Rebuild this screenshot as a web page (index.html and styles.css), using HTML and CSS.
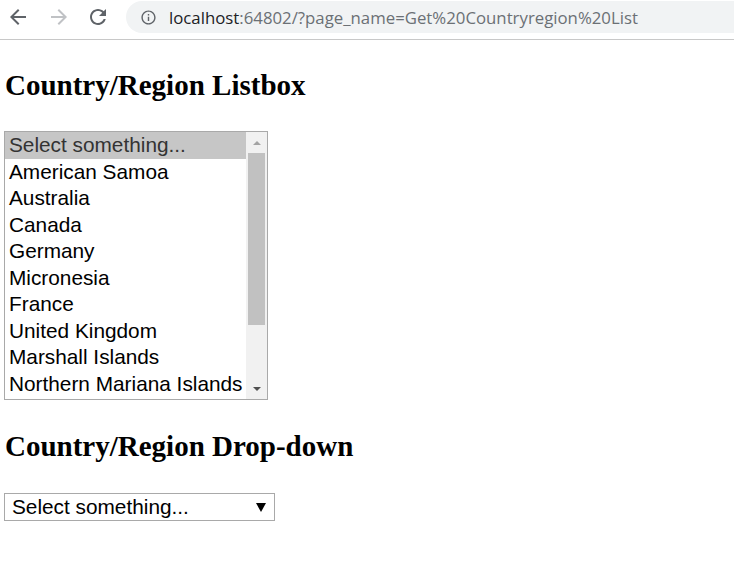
FILE: index.html
```html
<!DOCTYPE html>
<html lang="en">
<head>
<meta charset="utf-8">
<title>Get Countryregion List</title>
<link rel="stylesheet" href="styles.css">
</head>
<body>
<header class="chrome">
  <div class="nav">
    <svg class="nav-icon back" viewBox="0 0 24 24" width="24" height="24"><path d="M20 11H7.83l5.59-5.59L12 4l-8 8 8 8 1.41-1.41L7.83 13H20v-2z"/></svg>
    <svg class="nav-icon fwd" viewBox="0 0 24 24" width="24" height="24"><path d="M4 11h12.17l-5.59-5.59L12 4l8 8-8 8-1.41-1.41L16.17 13H4v-2z"/></svg>
    <svg class="nav-icon reload" viewBox="0 0 24 24" width="24" height="24"><path d="M17.65 6.35C16.2 4.9 14.21 4 12 4c-4.42 0-7.990 3.58-7.99 8s3.57 8 7.99 8c3.73 0 6.84-2.55 7.73-6h-2.08c-.82 2.33-3.04 4-5.650 4-3.31 0-6-2.69-6-6s2.69-6 6-6c1.66 0 3.14.69 4.22 1.78L13 11h7V4l-2.35 2.35z"/></svg>
  </div>
  <div class="omnibox">
    <svg class="info" viewBox="0 0 24 24" width="17" height="17"><path d="M11 7h2v2h-2zm0 4h2v6h-2zm1-9C6.48 2 2 6.48 2 12s4.48 10 10 10 10-4.48 10-10S17.52 2 12 2zm0 18c-4.41 0-8-3.59-8-8s3.59-8 8-8 8 3.59 8 8-3.59 8-8 8z"/></svg>
    <span class="url"><span class="host">localhost</span>:64802/?page_name=Get%20Countryregion%20List</span>
  </div>
</header>
<main class="page">
  <h2 class="title">Country/Region Listbox</h2>
  <div class="listbox" role="listbox">
    <div class="options">
      <div class="option selected">Select something...</div>
      <div class="option">American Samoa</div>
      <div class="option">Australia</div>
      <div class="option">Canada</div>
      <div class="option">Germany</div>
      <div class="option">Micronesia</div>
      <div class="option">France</div>
      <div class="option">United Kingdom</div>
      <div class="option">Marshall Islands</div>
      <div class="option">Northern Mariana Islands</div>
    </div>
    <div class="scrollbar">
      <div class="sb-btn"><span class="tri-up"></span></div>
      <div class="thumb"></div>
      <div class="sb-fill"></div>
      <div class="sb-btn"><span class="tri-down"></span></div>
    </div>
  </div>
  <h2 class="title title-2">Country/Region Drop-down</h2>
  <div class="dropdown">
    <span class="dd-text">Select something...</span>
    <svg class="dd-arrow" viewBox="0 0 10 9" width="10" height="9"><path d="M0 0h10L5 9z"/></svg>
  </div>
</main>
</body>
</html>
```

FILE: styles.css
```css
* { box-sizing: border-box; }
html, body { margin: 0; padding: 0; background: #fff; }
body { width: 734px; height: 571px; overflow: hidden; }

.chrome {
  height: 40px;
  border-bottom: 1px solid #c8c8c8;
  display: flex;
  align-items: flex-start;
  padding-top: 1px;
}
.nav {
  display: flex;
  align-items: center;
  height: 32px;
  padding-left: 6px;
  gap: 17px;
}
.nav-icon { display: block; }
.back, .reload { fill: #5f6368; }
.fwd { fill: #c0c2c5; }
.reload { margin-left: -2px; }
.omnibox {
  margin-left: 16px;
  flex: 1;
  height: 32px;
  background: #f1f3f4;
  border-radius: 16px 0 0 16px;
  display: flex;
  align-items: center;
  padding-left: 14px;
}
.info { fill: #5f6368; display: block; }
.url {
  margin-left: 12px;
  font-family: "Open Sans", "Noto Sans", sans-serif;
  font-size: 16.8px;
  color: #6b7075;
  white-space: nowrap;
}
.host { color: #202124; }

.page { padding: 0 4px; }
.title {
  font-family: "Liberation Serif", "Times New Roman", serif;
  font-weight: bold;
  font-size: 29px;
  line-height: 32px;
  margin: 29px 0 30px 1px;
  color: #000;
}
.title-2 { margin-top: 30px; margin-bottom: 31px; }

.listbox {
  width: 264px;
  height: 269px;
  border: 1px solid #a9a9a9;
  display: flex;
  font-family: "Liberation Sans", Arial, sans-serif;
  font-size: 20.8px;
}
.options { flex: 1; }
.option {
  height: 26.5px;
  line-height: 26.5px;
  padding-left: 4px;
  color: #000;
  white-space: nowrap;
}
.option.selected { background: #c6c6c6; color: #333; }

.scrollbar {
  width: 21px;
  background: #f1f1f1;
  display: flex;
  flex-direction: column;
  align-items: center;
}
.sb-btn {
  height: 21px;
  width: 21px;
  display: flex;
  align-items: center;
  justify-content: center;
}
.tri-up {
  width: 0; height: 0;
  border-left: 4px solid transparent;
  border-right: 4px solid transparent;
  border-bottom: 4px solid #a3a3a3;
}
.tri-down {
  width: 0; height: 0;
  border-left: 4px solid transparent;
  border-right: 4px solid transparent;
  border-top: 4px solid #505050;
}
.thumb {
  width: 17px;
  height: 172px;
  background: #c1c1c1;
}
.sb-fill { flex: 1; }

.dropdown {
  width: 271px;
  height: 28px;
  border: 1px solid #a9a9a9;
  display: flex;
  align-items: center;
  justify-content: space-between;
  padding: 0 8px 0 7px;
  font-family: "Liberation Sans", Arial, sans-serif;
  font-size: 20.8px;
  color: #000;
}
.dd-text { line-height: 26px; }
.dd-arrow { display: block; fill: #000; }
```
